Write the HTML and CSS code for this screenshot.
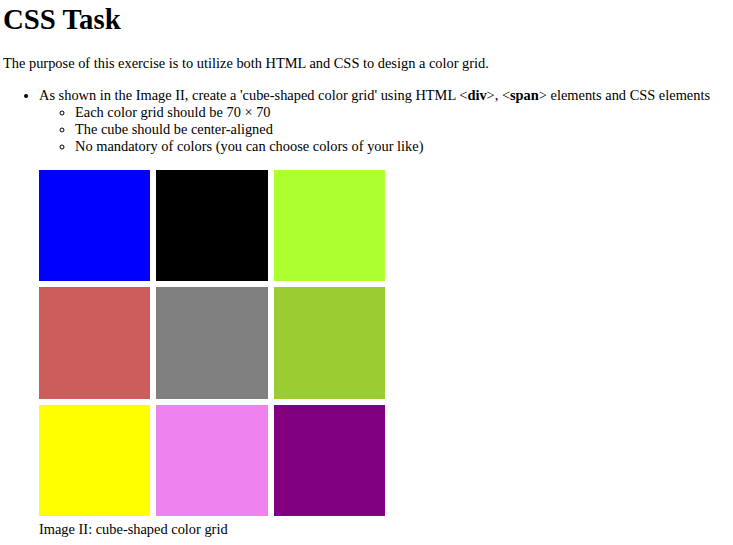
FILE: index.html
```html
<!DOCTYPE html>
<html>
<head>
<meta charset="utf-8">
<title>CSS Task</title>
<link rel="stylesheet" href="styles.css">
</head>
<body>
<h1 class="title">CSS Task</h1>
<p class="intro">The purpose of this exercise is to utilize both HTML and CSS to design a color grid.</p>
<ul class="tasks">
  <li>As shown in the Image II, create a 'cube-shaped color grid' using HTML &lt;<b>div</b>&gt;, &lt;<b>span</b>&gt; elements and CSS elements
    <ul class="sub">
      <li>Each color grid should be 70 × 70</li>
      <li>The cube should be center-aligned</li>
      <li>No mandatory of colors (you can choose colors of your like)</li>
    </ul>
    <div class="cube">
      <span class="cell c1"></span>
      <span class="cell c2"></span>
      <span class="cell c3"></span>
      <span class="cell c4"></span>
      <span class="cell c5"></span>
      <span class="cell c6"></span>
      <span class="cell c7"></span>
      <span class="cell c8"></span>
      <span class="cell c9"></span>
    </div>
    <div class="caption">Image II: cube-shaped color grid</div>
  </li>
</ul>
</body>
</html>
```

FILE: styles.css
```css
html, body {
  background: #ffffff;
}
body {
  margin: 0;
  padding: 0 3px;
  font-family: "Liberation Serif", "Times New Roman", serif;
  font-size: 14.4px;
  color: #000000;
}
.title {
  font-size: 28.8px;
  font-weight: bold;
  margin: 3px 0 19px;
}
.intro {
  margin: 0 0 15px;
}
.tasks {
  margin: 0;
  padding-left: 36px;
  list-style: disc;
}
.sub {
  margin: 0;
  padding-left: 36px;
  list-style: circle;
}
.cube {
  margin-top: 15px;
  display: grid;
  grid-template-columns: repeat(3, 111.3px);
  grid-auto-rows: 111.3px;
  gap: 6px;
}
.cell {
  display: block;
}
.c1 { background: #0000ff; }
.c2 { background: #000000; }
.c3 { background: #adff2f; }
.c4 { background: #cd5c5c; }
.c5 { background: #808080; }
.c6 { background: #9acd32; }
.c7 { background: #ffff00; }
.c8 { background: #ee82ee; }
.c9 { background: #800080; }
.caption {
  margin-top: 5px;
}
```
